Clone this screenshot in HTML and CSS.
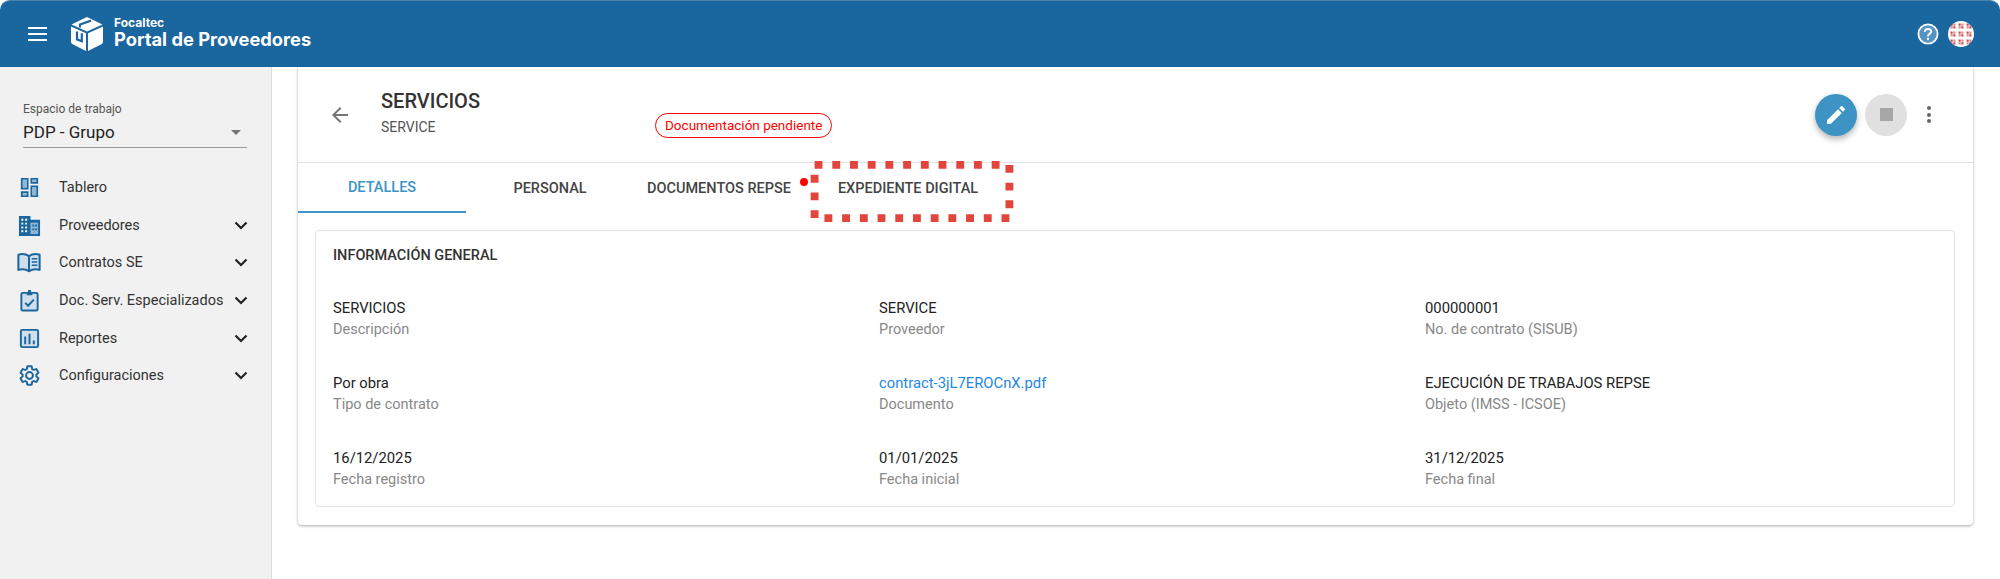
FILE: index.html
```html
<!DOCTYPE html>
<html lang="es">
<head>
<meta charset="UTF-8">
<title>Portal de Proveedores</title>
<link rel="stylesheet" href="styles.css">
</head>
<body>

<!-- HEADER -->
<header class="topbar">
    <div class="burger"><span></span><span></span><span></span></div>
    <svg class="logo" viewBox="0 0 32 34">
        <path fill="#fff" d="M16 0 31.5 7.6 16 14.6.5 7.6Z"/>
        <path fill="#fff" d="M0 9.4 15 16.2V34L1.6 27.2C.6 26.7 0 25.800 0 24.600Z"/>
        <path fill="#fff" d="M32 9.4 17 16.2V34L30.4 27.2C31.4 26.7 32 25.800 32 24.600Z"/>
        <path fill="none" stroke="#1a669e" stroke-width="2.2" d="M9 10.500V7.500L20 3.600"/>
        <path fill="none" stroke="#1a669e" stroke-width="2.2" d="M6 14.400V22.400L10.800 24.200V16.200"/>
    </svg>
    <div class="brand">
        <div class="brand-small">Focaltec</div>
        <div class="brand-big">Portal de Proveedores</div>
    </div>
    <div class="topbar-right">
        <svg class="help" viewBox="0 0 22 22">
            <circle cx="11" cy="11" r="9.600" fill="#5594c2" stroke="#fff" stroke-width="1.800"/>
            <path fill="none" stroke="#fff" stroke-width="2" d="M7.800 8.800C7.800 7 9.200 5.900 11 5.900S14.200 7 14.200 8.600C14.200 10.600 11 10.700 11 13.400"/>
            <rect x="10" y="14.800" width="2" height="2" fill="#fff"/>
        </svg>
        <svg class="avatar" viewBox="0 0 26 26">
            <defs>
                <pattern id="tile" x="1" y="1" width="8" height="8" patternUnits="userSpaceOnUse">
                    <rect width="8" height="8" fill="#fff"/>
                    <path fill="#c2514e" d="M1.500 1.500h2.200v2.200H1.500zM4.300 4.300h2.200v2.200H4.300z"/>
                    <path fill="#d98b88" d="M4.300 1.500h2.200v2.200H4.300zM1.500 4.300h2.200v2.200H1.500z"/>
                </pattern>
            </defs>
            <circle cx="13" cy="13" r="13" fill="url(#tile)"/>
        </svg>
    </div>
</header>

<div class="layout">

    <!-- SIDEBAR -->
    <aside class="sidebar">
        <div class="workspace">
            <div class="workspace-label">Espacio de trabajo</div>
            <div class="workspace-value">PDP - Grupo<span class="select-arrow"></span></div>
        </div>
        <nav class="menu">
            <div class="menu-item">
                <svg class="menu-icon" viewBox="0 0 24 24"><path fill="#1a669e" fill-rule="evenodd" d="M3 2h8v12H3Zm2 2v8h4V4ZM13 2h8v6h-8Zm2 2v2h4V4ZM3 16h8v6H3Zm2 2v2h4v-2ZM13 10h8v12h-8Zm2 2v8h4v-8Z"/><path fill="#8fb6d3" d="M5 4h4v8H5zM15 12h4v8h-4zM15 4h4v2h-4zM5 18h4v2H5z"/></svg>
                <span class="menu-text">Tablero</span>
            </div>
            <div class="menu-item">
                <svg class="menu-icon" viewBox="0 0 24 24"><path fill="#1a669e" d="M1 2h12v4h10v17H1Z"/><path fill="#fff" d="M3.500 5h2v2h-2zM7.500 5h2v2h-2zM3.500 9h2v2h-2zM7.500 9h2v2h-2zM3.500 13h2v2h-2zM7.500 13h2v2h-2zM3.500 17h2v2h-2zM7.500 17h2v2h-2z"/><path fill="#8fb6d3" d="M13 9h8v12h-8z"/><path fill="#1a669e" d="M15 11h2v2h-2zM18 11h2v2h-2zM15 15h2v2h-2zM18 15h2v2h-2z"/></svg>
                <span class="menu-text">Proveedores</span>
                <svg class="chevron" viewBox="0 0 14 9"><path d="M1.500 1.500 7 7l5.500-5.500"/></svg>
            </div>
            <div class="menu-item">
                <svg class="menu-icon book" viewBox="0 0 26 22"><path fill="#cfe0ec" stroke="#1a669e" stroke-width="2.200" stroke-linejoin="round" d="M13 4C10 2 5 1.600 1.500 2.500V19C5 18 10 18.500 13 20.500 16 18.500 21 18 24.500 19V2.500C21 1.600 16 2 13 4ZM13 4V20"/><path stroke="#1a669e" stroke-width="1.500" d="M16 7h6M16 10.500h6M16 14h6"/></svg>
                <span class="menu-text">Contratos SE</span>
                <svg class="chevron" viewBox="0 0 14 9"><path d="M1.500 1.500 7 7l5.500-5.500"/></svg>
            </div>
            <div class="menu-item">
                <svg class="menu-icon" viewBox="0 0 24 24"><rect x="3.500" y="4" width="17" height="18.500" rx="1.500" fill="#cfe0ec" stroke="#1a669e" stroke-width="2"/><path fill="#1a669e" d="M9 4.500h6v2H9ZM10.500 1h3v4h-3Z"/><path fill="none" stroke="#1a669e" stroke-width="2" d="M7.500 14.500 10.500 17.500 16.500 11"/></svg>
                <span class="menu-text">Doc. Serv. Especializados</span>
                <svg class="chevron" viewBox="0 0 14 9"><path d="M1.500 1.500 7 7l5.500-5.500"/></svg>
            </div>
            <div class="menu-item">
                <svg class="menu-icon" viewBox="0 0 24 24"><rect x="3" y="3" width="18" height="18" rx="1.500" fill="#cfe0ec" stroke="#1a669e" stroke-width="2"/><path fill="#1a669e" d="M6.500 10h2v8h-2zM11 7h2v11h-2zM15.500 14h2v4h-2z"/></svg>
                <span class="menu-text">Reportes</span>
                <svg class="chevron" viewBox="0 0 14 9"><path d="M1.500 1.500 7 7l5.500-5.500"/></svg>
            </div>
            <div class="menu-item">
                <svg class="menu-icon" viewBox="0 0 24 24"><path fill="none" stroke="#1a669e" stroke-width="2" d="M19.140 12.940c.04-.3.06-.61.06-.94 0-.32-.02-.64-.07-.94l2.030-1.580a.49.49 0 0 0 .12-.61l-1.920-3.320a.488.488 0 0 0-.59-.22l-2.390.96c-.5-.38-1.030-.7-1.620-.94l-.36-2.540a.484.484 0 0 0-.48-.41h-3.840c-.24 0-.43.17-.47.41l-.36 2.540c-.59.24-1.130.57-1.620.94l-2.390-.96c-.22-.08-.47 0-.59.22L2.740 8.870c-.12.21-.08.47.12.61l2.030 1.580c-.05.3-.09.63-.09.94s.02.64.07.94l-2.030 1.580a.49.49 0 0 0-.12.61l1.920 3.320c.12.22.37.29.59.22l2.390-.96c.5.38 1.030.7 1.620.94l.36 2.540c.05.24.24.41.48.41h3.840c.24 0 .44-.17.47-.41l.36-2.540c.59-.24 1.130-.56 1.620-.94l2.390.96c.22.08.47 0 .59-.22l1.920-3.320c.12-.22.07-.47-.12-.61l-2.010-1.580zM12 15.600c-1.980 0-3.600-1.620-3.600-3.600s1.620-3.600 3.600-3.600 3.600 1.620 3.600 3.600-1.620 3.600-3.600 3.600z"/></svg>
                <span class="menu-text">Configuraciones</span>
                <svg class="chevron" viewBox="0 0 14 9"><path d="M1.500 1.500 7 7l5.500-5.500"/></svg>
            </div>
        </nav>
    </aside>

    <!-- MAIN -->
    <main class="main">
        <section class="card">
            <div class="card-head">
                <svg class="back" viewBox="0 0 24 24"><path d="M20 11H7.800l5.600-5.600L12 4l-8 8 8 8 1.400-1.400L7.800 13H20z"/></svg>
                <div class="titles">
                    <h1>SERVICIOS</h1>
                    <div class="subtitle">SERVICE</div>
                </div>
                <span class="badge">Documentación pendiente</span>
                <div class="actions">
                    <button class="fab fab-edit">
                        <svg viewBox="0 0 24 24"><path fill="#fff" d="M3 17.250V21h3.750L17.810 9.940l-3.750-3.750zM20.710 7.040a1 1 0 0 0 0-1.410l-2.340-2.340a1 1 0 0 0-1.410 0l-1.830 1.830 3.750 3.750z"/></svg>
                    </button>
                    <button class="fab fab-stop"><span class="stop-square"></span></button>
                    <div class="more"><span></span><span></span><span></span></div>
                </div>
            </div>

            <div class="tabs">
                <div class="tab tab-active">DETALLES</div>
                <div class="tab">PERSONAL</div>
                <div class="tab tab-docs">DOCUMENTOS REPSE<span class="tab-dot"></span></div>
                <div class="tab tab-exp">EXPEDIENTE DIGITAL
                    <svg class="marker" viewBox="0 0 206 62"><rect x="4" y="4" width="198" height="54" fill="none" stroke="#e2453c" stroke-width="8" stroke-dasharray="8 10"/></svg>
                </div>
            </div>

            <div class="info">
                <h2>INFORMACIÓN GENERAL</h2>
                <div class="info-grid">
                    <div class="field"><div class="value">SERVICIOS</div><div class="label">Descripción</div></div>
                    <div class="field"><div class="value">SERVICE</div><div class="label">Proveedor</div></div>
                    <div class="field"><div class="value">000000001</div><div class="label">No. de contrato (SISUB)</div></div>
                    <div class="field"><div class="value">Por obra</div><div class="label">Tipo de contrato</div></div>
                    <div class="field"><div class="value link">contract-3jL7EROCnX.pdf</div><div class="label">Documento</div></div>
                    <div class="field"><div class="value">EJECUCIÓN DE TRABAJOS REPSE</div><div class="label">Objeto (IMSS - ICSOE)</div></div>
                    <div class="field"><div class="value">16/12/2025</div><div class="label">Fecha registro</div></div>
                    <div class="field"><div class="value">01/01/2025</div><div class="label">Fecha inicial</div></div>
                    <div class="field"><div class="value">31/12/2025</div><div class="label">Fecha final</div></div>
                </div>
            </div>
        </section>
    </main>
</div>

</body>
</html>
```

FILE: styles.css
```css
* {
    margin: 0;
    padding: 0;
    box-sizing: border-box;
}

html, body {
    width: 100%;
    height: 100%;
    background: #fff;
    color: #2b2b2b;
    font-family: Roboto, Arial, sans-serif;
    overflow: hidden;
}

/* HEADER */
.topbar {
    height: 67px;
    background: #1a669e;
    border-top: 1px solid #4a85b0;
    border-radius: 10px 10px 0 0;
    display: flex;
    align-items: center;
    padding: 0 26px 0 28px;
    color: #fff;
}

.burger {
    width: 19px;
    display: flex;
    flex-direction: column;
    gap: 4px;
}

.burger span {
    height: 2px;
    background: #fff;
}

.logo {
    width: 32px;
    height: 34px;
    margin-left: 24px;
    margin-right: 1px;
}

.brand {
    margin-left: 10px;
    margin-top: -3px;
    font-family: Inter, Arial, sans-serif;
    font-weight: 700;
}

.brand-small {
    font-size: 12px;
    line-height: 13px;
}

.brand-big {
    font-size: 18.3px;
    line-height: 20px;
}

.topbar-right {
    margin-left: auto;
    display: flex;
    align-items: center;
    gap: 9px;
}

.help {
    width: 22px;
    height: 22px;
}

.avatar {
    width: 26px;
    height: 26px;
}

/* LAYOUT */
.layout {
    display: flex;
    height: 512px;
}

.sidebar {
    width: 272px;
    flex-shrink: 0;
    background: #f1f1f1;
    border-right: 1px solid #dcdcdc;
    padding-top: 34px;
}

.workspace {
    margin: 0 24px 0 23px;
    height: 47px;
    border-bottom: 1px solid #9a9a9a;
}

.workspace-label {
    font-size: 12px;
    line-height: 16px;
    color: #555;
}

.workspace-value {
    font-size: 17px;
    line-height: 24px;
    margin-top: 3px;
    color: #222;
    position: relative;
}

.select-arrow {
    position: absolute;
    right: 6px;
    top: 10px;
    border-left: 5px solid transparent;
    border-right: 5px solid transparent;
    border-top: 5px solid #757575;
}

.menu {
    margin-top: 21px;
}

.menu-item {
    height: 37.6px;
    display: flex;
    align-items: center;
    padding-left: 18px;
    font-size: 14.5px;
    color: #333;
}

.menu-icon {
    width: 23px;
    height: 23px;
    flex-shrink: 0;
}

.menu-icon.book {
    width: 24px;
    margin-left: -1px;
}

.menu-text {
    margin-left: 18px;
    white-space: nowrap;
}

.chevron {
    width: 14px;
    height: 9px;
    margin-left: auto;
    margin-right: 23px;
    flex-shrink: 0;
    fill: none;
    stroke: #222;
    stroke-width: 2.2;
}

/* MAIN */
.main {
    flex: 1;
    min-width: 0;
    padding: 0 27px 0 26px;
}

.card {
    height: 458px;
    background: #fff;
    border-radius: 0 0 4px 4px;
    box-shadow: 0 1px 3px rgba(0,0,0,0.35);
}

.card-head {
    height: 96px;
    display: flex;
    align-items: center;
    border-bottom: 1px solid #e2e2e2;
    padding: 0 36px 0 30px;
}

.back {
    width: 24px;
    height: 24px;
    fill: #757575;
}

.titles {
    margin-left: 29px;
    width: 274px;
    margin-top: -4px;
}

.titles h1 {
    font-size: 20px;
    font-weight: 500;
    line-height: 24px;
    color: #333;
}

.subtitle {
    font-size: 14px;
    line-height: 18px;
    margin-top: 5px;
    color: #555;
}

.badge {
    align-self: flex-end;
    margin-bottom: 24px;
    height: 25px;
    line-height: 22px;
    padding: 0 9px;
    border: 1px solid #f00;
    border-radius: 13px;
    font-size: 13.5px;
    color: #f00;
    white-space: nowrap;
}

.actions {
    margin-left: auto;
    display: flex;
    align-items: center;
    gap: 8px;
}

.fab {
    width: 42px;
    height: 42px;
    border: 0;
    border-radius: 50%;
    display: flex;
    align-items: center;
    justify-content: center;
}

.fab-edit {
    background: #3c93c4;
    box-shadow: 0 3px 6px rgba(0,0,0,0.3);
}

.fab-edit svg {
    width: 24px;
    height: 24px;
}

.fab-stop {
    background: #e0e0e0;
}

.stop-square {
    width: 13px;
    height: 13px;
    background: #a6a6a6;
}

.more {
    width: 16px;
    margin-left: 6px;
    display: flex;
    flex-direction: column;
    align-items: center;
    gap: 2.5px;
}

.more span {
    width: 4px;
    height: 4px;
    border-radius: 50%;
    background: #666;
}

/* TABS */
.tabs {
    display: flex;
    height: 50px;
}

.tab {
    width: 168px;
    flex-shrink: 0;
    display: flex;
    align-items: center;
    justify-content: center;
    font-size: 14.5px;
    font-weight: 500;
    color: #444;
    position: relative;
}

.tab-active {
    color: #3c93c4;
    border-bottom: 2px solid #3c93c4;
}

.tab-docs {
    width: 170px;
}

.tab-exp {
    width: 208px;
}

.tab-dot {
    position: absolute;
    right: -4px;
    top: 15px;
    width: 8px;
    height: 8px;
    border-radius: 50%;
    background: #f00;
}

.marker {
    position: absolute;
    left: 5px;
    top: -2px;
    width: 206px;
    height: 61px;
}

/* INFO */
.info {
    margin: 17px 18px 0 17px;
    height: 277px;
    border: 1px solid #e2e2e2;
    border-radius: 4px;
    padding: 16px 16px 0 17px;
}

.info h2 {
    font-size: 14.5px;
    font-weight: 500;
    line-height: 18px;
    color: #333;
}

.info-grid {
    display: grid;
    grid-template-columns: 546px 546px 1fr;
    row-gap: 33px;
    margin-top: 33px;
}

.value {
    font-size: 14.8px;
    line-height: 21px;
    color: #222;
}

.label {
    font-size: 14.5px;
    line-height: 21px;
    color: #888;
}

.link {
    color: #1e88e5;
}
```
